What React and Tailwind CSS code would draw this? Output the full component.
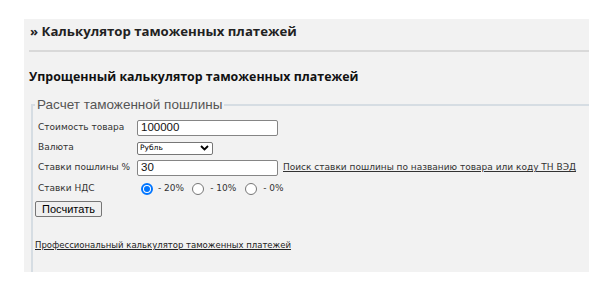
export default function App() {
  const verdana = { fontFamily: '"DejaVu Sans", Verdana, sans-serif' };

  const Radio = ({ checked }) =>
    checked ? (
      <span className="w-[12px] h-[12px] rounded-full border-[2px] border-[#0075ff] bg-white flex items-center justify-center">
        <span className="w-[6px] h-[6px] rounded-full bg-[#0075ff]" />
      </span>
    ) : (
      <span className="w-[12px] h-[12px] rounded-full border border-[#767676] bg-white" />
    );

  return (
    <div className="w-[602px] h-[297px] bg-white pt-[19px] pl-[24px]">
      <div className="w-[565px] h-[253px] bg-[#f2f2f2] overflow-hidden font-['Open_Sans',sans-serif]">
        {/* header */}
        <div className="h-[31px] pl-[6px] pt-[2px]">
          <h1 className="text-[13.2px] leading-[20px] font-bold text-[#222]">
            » Калькулятор таможенных платежей
          </h1>
        </div>
        <div className="ml-[5px] border-t-2 border-[#d9d9d9]" />

        <h2 className="mt-[15px] pl-[5px] text-[12.4px] leading-[20px] font-bold text-[#111]">
          Упрощенный калькулятор таможенных платежей
        </h2>

        <fieldset className="ml-[7px] mt-[9px] w-[600px] h-[200px] border-2 border-[#d6dde3] pl-[2px]">
          <legend className="px-[2px] text-[13.5px] leading-[18px] text-[#555] font-['Liberation_Sans',sans-serif]">
            Расчет таможенной пошлины
          </legend>

          <div style={verdana} className="text-[9px] text-[#333]">
            <div className="mt-[6px] h-[16px] flex items-center">
              <span className="w-[102px] pl-[3px]">Стоимость товара</span>
              <div className="w-[141px] h-[16px] bg-white border border-[#858585] rounded-[2px] pl-[3px] flex items-center text-[11.5px] text-[#111] font-['Liberation_Sans',sans-serif]">
                100000
              </div>
            </div>

            <div className="mt-[5px] h-[14px] flex items-center">
              <span className="w-[102px] pl-[3px]">Валюта</span>
              <div className="w-[76px] h-[13px] bg-white border border-[#767676] rounded-[2px] pl-[2px] pr-[3px] flex items-center justify-between">
                <span className="text-[7.5px] text-black font-medium">Рубль</span>
                <svg width="9" height="6" viewBox="0 0 9 6">
                  <path d="M1 1l3.5 3.5L8 1" fill="none" stroke="#000" strokeWidth="1.8" />
                </svg>
              </div>
            </div>

            <div className="mt-[5px] h-[16px] flex items-center">
              <span className="w-[102px] pl-[3px]">Ставки пошлины %</span>
              <div className="w-[141px] h-[16px] bg-white border border-[#858585] rounded-[2px] pl-[3px] flex items-center text-[11.5px] text-[#111] font-['Liberation_Sans',sans-serif]">
                30
              </div>
              <a href="#" className="ml-[5px] underline text-[#333]">
                Поиск ставки пошлины по названию товара или коду ТН ВЭД
              </a>
            </div>

            <div className="mt-[6px] h-[14px] flex items-center">
              <span className="w-[106px] pl-[3px]">Ставки НДС</span>
              <Radio checked />
              <span className="ml-[5px] mr-[8px]">- 20%</span>
              <Radio />
              <span className="ml-[6px] mr-[9px]">- 10%</span>
              <Radio />
              <span className="ml-[6px]">- 0%</span>
            </div>

            <button className="mt-[5px] w-[67px] h-[16px] bg-[#efefef] border border-[#767676] rounded-[2px] text-[11px] leading-none text-black font-['Liberation_Sans',sans-serif]">
              Посчитать
            </button>

            <div className="mt-[22px] leading-[12px]">
              <a href="#" className="underline text-[#222] text-[8.5px]">
                Профессиональный калькулятор таможенных платежей
              </a>
            </div>
          </div>
        </fieldset>
      </div>
    </div>
  );
}
